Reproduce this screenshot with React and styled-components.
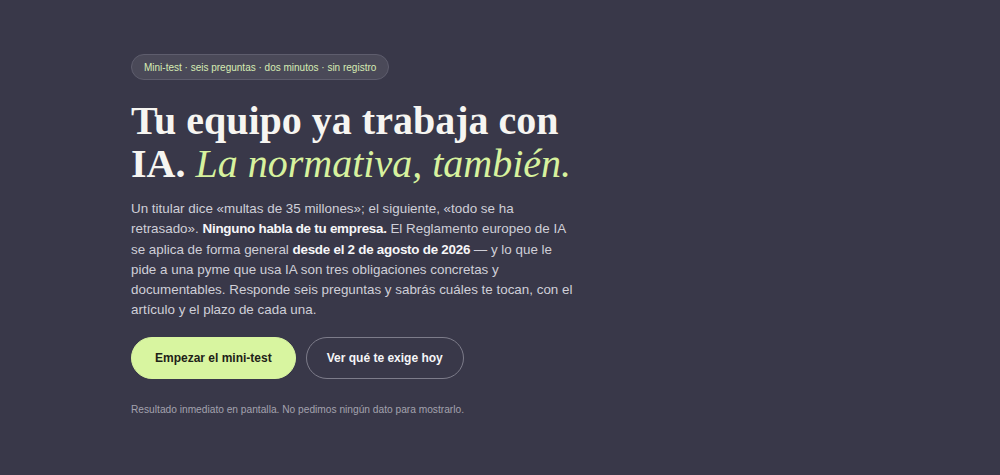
import React from 'react';
import styled, { createGlobalStyle } from 'styled-components';

const GlobalStyle = createGlobalStyle`
  html, body {
    margin: 0;
    padding: 0;
    background: #393849;
  }
  body {
    font-family: "Liberation Sans", Arial, sans-serif;
    -webkit-font-smoothing: antialiased;
  }
`;

const Page = styled.main`
  min-height: 475px;
  box-sizing: border-box;
  padding: 54px 131px 0;
  background: #393849;
`;

const Hero = styled.section`
  display: flex;
  flex-direction: column;
  align-items: flex-start;
  max-width: 480px;
`;

const Eyebrow = styled.div`
  display: inline-flex;
  align-items: center;
  height: 26px;
  box-sizing: border-box;
  padding: 0 12px;
  border-radius: 999px;
  border: 1px solid #5e5d6d;
  background: #4a4958;
  color: #d6ecb4;
  font-size: 10px;
`;

const Title = styled.h1`
  margin: 19px 0 0;
  font-family: "Liberation Serif", "DejaVu Serif", serif;
  font-weight: 700;
  font-size: 40px;
  line-height: 43px;
  color: #f6f5f1;
  white-space: nowrap;

  em {
    font-style: italic;
    font-weight: 400;
    font-size: 1em;
    color: #d7f29e;
  }
`;

const Lead = styled.p`
  margin: 14px 0 0;
  font-size: 13.4px;
  line-height: 20.3px;
  color: #cfcfd8;
  width: 444px;

  strong {
    color: #f6f6f8;
    font-weight: 700;
    letter-spacing: -0.25px;
  }
`;

const Actions = styled.div`
  display: flex;
  gap: 10px;
  margin-top: 16px;
`;

const Button = styled.button`
  height: 42px;
  box-sizing: border-box;
  padding: 0 ${({ $primary }) => ($primary ? '23px' : '20px')};
  border-radius: 999px;
  font-family: inherit;
  font-weight: 700;
  font-size: 12px;
  cursor: pointer;
  border: 1px solid ${({ $primary }) => ($primary ? '#d8f5a0' : '#7d7c8a')};
  background: ${({ $primary }) => ($primary ? '#d8f5a0' : 'transparent')};
  color: ${({ $primary }) => ($primary ? '#1e2218' : '#f5f5f7')};
`;

const Note = styled.p`
  margin: 25px 0 0;
  font-size: 10.2px;
  color: #a3a2ae;
`;

export default function App() {
  return (
    <>
      <GlobalStyle />
      <Page>
        <Hero>
          <Eyebrow>Mini-test · seis preguntas · dos minutos · sin registro</Eyebrow>
          <Title>
            Tu equipo ya trabaja con
            <br />
            IA. <em>La normativa, también.</em>
          </Title>
          <Lead>
            Un titular dice «multas de 35 millones»; el siguiente, «todo se ha retrasado».{' '}
            <strong>Ninguno habla de tu empresa.</strong> El Reglamento europeo de IA se aplica de
            forma general <strong>desde el 2 de agosto de 2026</strong> — y lo que le pide a una
            pyme que usa IA son tres obligaciones concretas y documentables. Responde seis
            preguntas y sabrás cuáles te tocan, con el artículo y el plazo de cada una.
          </Lead>
          <Actions>
            <Button $primary>Empezar el mini-test</Button>
            <Button>Ver qué te exige hoy</Button>
          </Actions>
          <Note>Resultado inmediato en pantalla. No pedimos ningún dato para mostrarlo.</Note>
        </Hero>
      </Page>
    </>
  );
}
